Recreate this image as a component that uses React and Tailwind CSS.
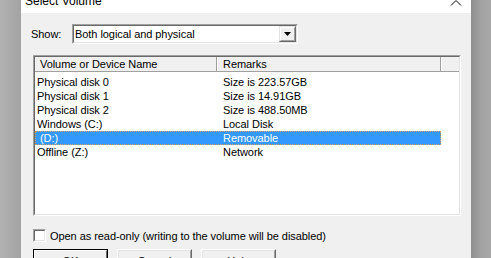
export default function App() {
  const rows = [
    ["Physical disk 0", "Size is 223.57GB", false],
    ["Physical disk 1", "Size is 14.91GB", false],
    ["Physical disk 2", "Size is 488.50MB", false],
    ["Windows (C:)", "Local Disk", false],
    ["\u00a0(D:)", "Removable", true],
    ["Offline (Z:)", "Network", false],
  ];
  return (
    <div className="flex w-[491px] h-[258px] overflow-hidden font-['Liberation_Sans',Arial,sans-serif] text-[11px] leading-[14px] tracking-[-0.06px] text-black">
      <div className="w-[21px] h-full bg-linear-to-r from-[#b2b2b2] to-[#a3a3a3]" />
      <div className="w-[450px] h-full flex flex-col bg-[#f0f0f0]">
        <div className="h-[13px] bg-white relative overflow-hidden shrink-0">
          <div className="-mt-[5px] pl-[4px] text-[12px] leading-[12px] tracking-normal text-black">Select Volume</div>
          <svg className="absolute left-[429px] top-0" width="12" height="6" viewBox="0 0 12 6">
            <path d="M1 5.5 L6 0.5 L11 5.5" fill="none" stroke="#000" strokeWidth="1" />
          </svg>
        </div>
        <div className="flex-1 flex flex-col pl-[12px]">
          <div className="flex items-center mt-[11px] h-[20px]">
            <span className="w-[41px] -ml-[2px] text-[#000]">Show:</span>
            <div className="w-[226px] h-[20px] border border-t-[#a0a0a0] border-l-[#a0a0a0] border-r-white border-b-white">
              <div className="w-full h-full border border-t-[#696969] border-l-[#696969] border-r-[#e3e3e3] border-b-[#e3e3e3] bg-white flex items-center">
                <span className="flex-1 pl-[1px] whitespace-nowrap">Both logical and physical</span>
                <div className="w-[17px] h-full border border-t-[#e3e3e3] border-l-[#e3e3e3] border-r-[#696969] border-b-[#696969] bg-[#f0f0f0]">
                  <div className="w-full h-full border border-t-white border-l-white border-r-[#a0a0a0] border-b-[#a0a0a0] flex items-center justify-center">
                    <svg width="7" height="4" viewBox="0 0 7 4">
                      <path d="M0 0 H7 L3.5 4 Z" fill="#000" />
                    </svg>
                  </div>
                </div>
              </div>
            </div>
          </div>
          <div className="mt-[11px] w-[428px] h-[161px] border border-t-[#a0a0a0] border-l-[#a0a0a0] border-r-white border-b-white">
            <div className="w-full h-full border border-t-[#696969] border-l-[#696969] border-r-[#e3e3e3] border-b-[#e3e3e3] bg-white flex flex-col">
              <div className="flex h-[15px] bg-[#f0f0f0] border-b border-[#a0a0a0] shrink-0">
                <div className="w-[182px] pl-[5px] border-r border-[#a0a0a0] leading-[14px] whitespace-nowrap">Volume or Device Name</div>
                <div className="w-[224px] pl-[5px] border-l border-white border-r border-r-[#a0a0a0] leading-[14px] whitespace-nowrap">Remarks</div>
                <div className="flex-1 border-l border-white" />
              </div>
              <div className="pt-[3px] flex flex-col">
                {rows.map(([a, b, sel], i) => (
                  <div
                    key={i}
                    className={
                      sel
                        ? "flex w-[406px] h-[14px] bg-[#3399ff] text-white outline outline-1 outline-dotted outline-[#e0a060] -outline-offset-1"
                        : "flex w-[406px] h-[14px]"
                    }
                  >
                    <div className="w-[182px] pl-[2px] whitespace-nowrap">{a}</div>
                    <div className="w-[224px] pl-[6px] whitespace-nowrap">{b}</div>
                  </div>
                ))}
              </div>
            </div>
          </div>
          <div className="flex items-center mt-[13px] h-[13px]">
            <div className="w-[13px] h-[13px] border border-t-[#a0a0a0] border-l-[#a0a0a0] border-r-white border-b-white">
              <div className="w-full h-full border border-t-[#696969] border-l-[#696969] border-r-[#e3e3e3] border-b-[#e3e3e3] bg-white" />
            </div>
            <span className="ml-[4px] whitespace-nowrap">Open as read-only (writing to the volume will be disabled)</span>
          </div>
          <div className="flex gap-[9px] mt-[7px]">
            <div className="w-[75px] h-[23px] border border-black shrink-0">
              <div className="w-full h-full border border-t-white border-l-white border-r-[#696969] border-b-[#696969] flex items-center justify-center">OK</div>
            </div>
            <div className="w-[75px] h-[23px] border border-t-white border-l-white border-r-[#696969] border-b-[#696969] shrink-0">
              <div className="w-full h-full border border-t-[#e3e3e3] border-l-[#e3e3e3] border-r-[#a0a0a0] border-b-[#a0a0a0] flex items-center justify-center">Cancel</div>
            </div>
            <div className="w-[75px] h-[23px] border border-t-white border-l-white border-r-[#696969] border-b-[#696969] shrink-0">
              <div className="w-full h-full border border-t-[#e3e3e3] border-l-[#e3e3e3] border-r-[#a0a0a0] border-b-[#a0a0a0] flex items-center justify-center">Help</div>
            </div>
          </div>
        </div>
      </div>
      <div className="w-[20px] h-full bg-linear-to-r from-[#8e8e8e] via-[#a2a2a2] to-[#a8a8a8]" />
    </div>
  );
}
